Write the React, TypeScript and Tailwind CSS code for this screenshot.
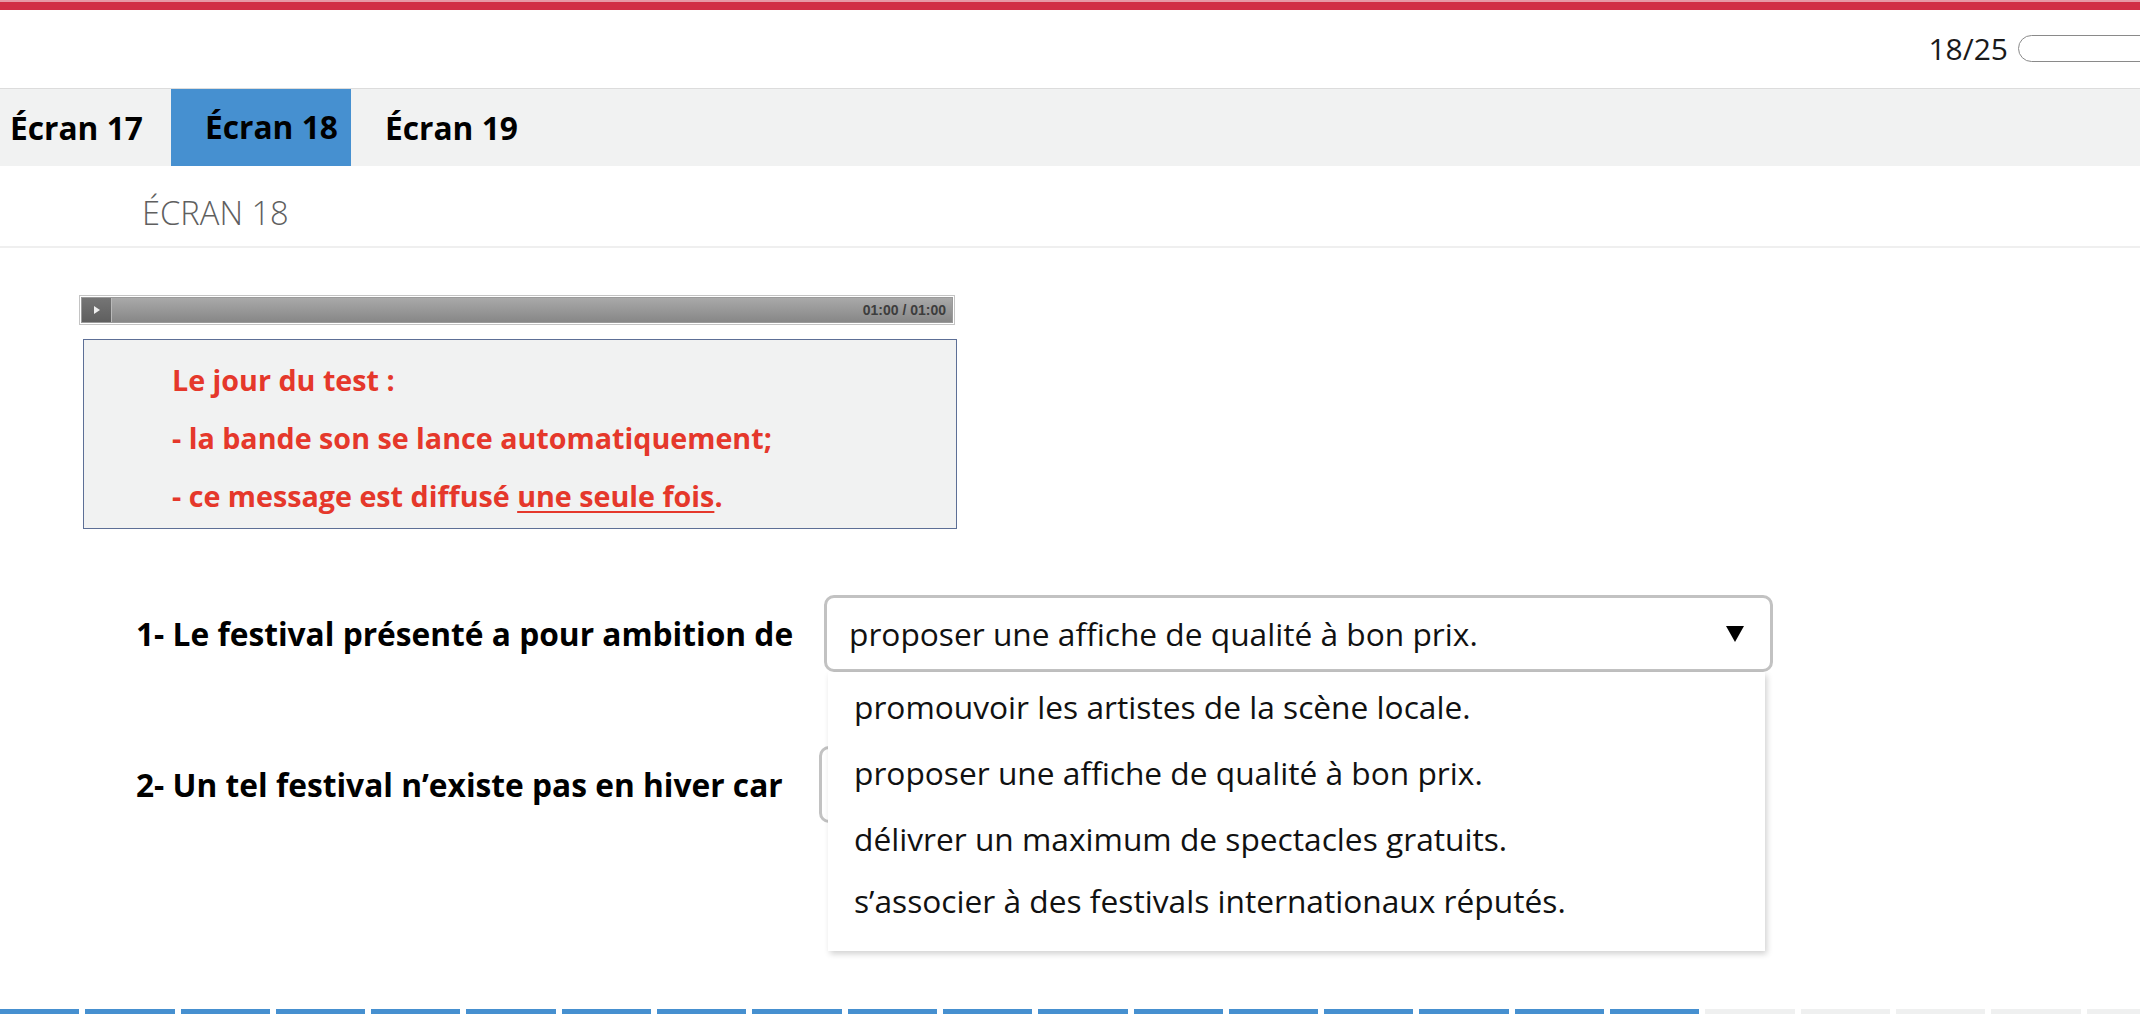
import React from 'react';

const OPTIONS = [
  { label: 'promouvoir les artistes de la scène locale.', h: 'h-[66px]' },
  { label: 'proposer une affiche de qualité à bon prix.', h: 'h-[66px]' },
  { label: 'délivrer un maximum de spectacles gratuits.', h: 'h-[66px]' },
  { label: 's’associer à des festivals internationaux réputés.', h: 'h-[58px]' },
];

const TOTAL = 25;
const DONE = 18;

function AudioBar() {
  return (
    <div className="ml-[79px] mt-[47px] w-[876px] h-[30px] border border-[#c4c4c4] bg-white p-[1px]">
      <div className="flex h-full border border-[#9a9a9a] bg-gradient-to-b from-[#a9a9a9] to-[#878787]">
        <div className="flex w-[30px] items-center justify-center border-r border-[#b9b9b9] bg-gradient-to-b from-[#757575] to-[#5f5f5f]">
          <span className="block h-0 w-0 border-y-[4px] border-l-[6px] border-y-transparent border-l-[#eeeeee]" />
        </div>
        <div className="flex flex-1 items-center justify-end pr-[6px] font-['Liberation_Sans',sans-serif] text-[14px] font-bold text-[#3d3d3d]">
          01:00 / 01:00
        </div>
      </div>
    </div>
  );
}

function Select({ value, open, width }: { value?: string; open?: boolean; width: string }) {
  return (
    <div className="relative">
      <div className={`flex h-[77px] ${width} items-center justify-between rounded-[10px] border-[3px] border-[#c2c2c2] bg-white pl-[22px] pr-[26px]`}>
        <span className="text-[31.7px] text-[#111]">{value}</span>
        {/* select arrow */}
        <span className="block h-0 w-0 border-x-[9px] border-t-[16px] border-x-transparent border-t-black" />
      </div>
      {open && (
        <div className="absolute left-[4px] top-full z-10 w-[937px] bg-white pt-[2px] pb-[21px] shadow-[2px_3px_6px_rgba(0,0,0,0.18)]">
          {OPTIONS.map((o) => (
            <div key={o.label} className={`flex ${o.h} items-center pl-[26px] text-[31.7px] text-[#111]`}>
              {o.label}
            </div>
          ))}
        </div>
      )}
    </div>
  );
}

export default function App() {
  return (
    <div className="flex h-screen w-full flex-col overflow-hidden bg-white font-['Open_Sans',sans-serif] text-black">
      {/* top red stripe */}
      <div className="h-[2px] bg-[#e69aa5]" />
      <div className="h-[8px] bg-[#d12f45]" />

      {/* header with counter */}
      <header className="flex h-[79px] items-center justify-end border-b border-[#dcdcdc] pb-[2px]">
        <span className="text-[30px] text-[#1a1a1a]">18/25</span>
        <div className="ml-[10px] -mr-[40px] h-[27px] w-[162px] rounded-full border border-[#8a8a8a] bg-white" />
      </header>

      {/* screen tabs */}
      <nav className="flex h-[77px] items-stretch bg-[#f1f2f2]">
        <div className="flex w-[171px] items-center pl-[10px] text-[31.7px] font-bold">Écran 17</div>
        <div className="flex w-[180px] items-center border-b-2 border-[#4690d0] bg-[#4690d0] pl-[34px] text-[31.7px] font-bold">Écran 18</div>
        <div className="flex w-[180px] items-center pl-[34px] text-[31.7px] font-bold">Écran 19</div>
      </nav>

      <div className="flex h-[82px] items-center border-b-2 border-[#efefef] pl-[142px] pt-[14px] text-[32.7px] font-light text-[#5f5f5f]">
        ÉCRAN 18
      </div>

      <main className="flex-1">
        <AudioBar />

        <div className="ml-[83px] mt-[14px] h-[190px] w-[874px] border border-[#5d6f96] bg-[#f1f2f2] pl-[88px] pt-[11px] text-[28.7px] font-bold leading-[58px] text-[#e5382b]">
          <p>Le jour du test :</p>
          <p>- la bande son se lance automatiquement;</p>
          <p>
            - ce message est diffusé <span className="underline decoration-2 underline-offset-4">une seule fois</span>.
          </p>
        </div>

        <div className="relative z-10 mt-[66px] flex items-center pl-[136px]">
          <span className="w-[688px] text-[31.7px] font-bold">1- Le festival présenté a pour ambition de</span>
          <Select value="proposer une affiche de qualité à bon prix." open width="w-[949px]" />
        </div>

        <div className="mt-[74px] flex items-center pl-[136px]">
          <span className="w-[683px] text-[31.7px] font-bold">2- Un tel festival n’existe pas en hiver car</span>
          <Select width="w-[900px]" />
        </div>
      </main>

      {/* progress segments */}
      <div className="-ml-[10px] flex h-[5px] gap-[6px]">
        {Array.from({ length: TOTAL }).map((_, i) => (
          <div key={i} className={`h-full w-[89.3px] shrink-0 ${i < DONE ? 'bg-[#4690d0]' : 'bg-[#eff0f0]'}`} />
        ))}
      </div>
    </div>
  );
}
